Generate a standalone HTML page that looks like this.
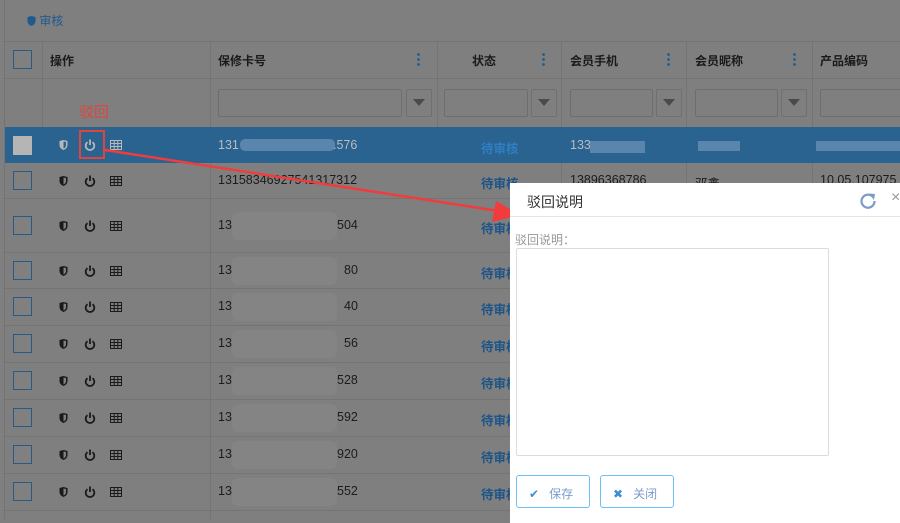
<!DOCTYPE html>
<html><head><meta charset="utf-8"><style>
*{box-sizing:border-box;margin:0;padding:0}
body{width:900px;height:519px;overflow:hidden;background:#7f7f7f;font-family:"Liberation Sans","Noto Sans CJK SC",sans-serif;position:relative;font-size:12px;color:#1e1e1e}
.abs{position:absolute}
.hl{position:absolute;height:1px;background:#747474}
.vl{position:absolute;width:1px;background:#747474}
.cb{position:absolute;left:13px;width:19px;height:19px;border:1px solid #285a85;background:#808080}
.th{position:absolute;top:52px;font-weight:bold;font-size:12px;color:#1a1a1a}
.dots{position:absolute;top:52px;width:3px;height:14px;background:radial-gradient(circle,#2b5f8a 1.3px,transparent 1.6px) 0 0/3px 5px repeat-y}
.inp{position:absolute;top:89px;height:28px;border:1px solid #6e6e6e;border-radius:2px;background:#7f7f7f}
.fb{position:absolute;top:89px;width:26px;height:28px;border:1px solid #707070;border-radius:2px}
.fb:after{content:"";position:absolute;left:6px;top:9px;border-left:6px solid transparent;border-right:6px solid transparent;border-top:7px solid #4a4a4a}
.row{position:absolute;left:5px;width:895px;border-bottom:1px solid #747474}
.txt{position:absolute;font-size:12.5px;color:#1c1c1c}
.st{position:absolute;left:481px;font-weight:bold;color:#1c5488;font-size:12.5px}
.blur{position:absolute;background:#848484;border-radius:6px}
svg.i{position:absolute}
</style></head><body>
<div class="vl" style="left:4px;top:0;height:519px"></div>
<div class="abs" style="left:27px;top:12px;color:#1f5a8e;font-size:12px"><svg width="9" height="10" style="vertical-align:-1px"><path d="M0.5 1 L4.5 0 L8.5 1 L8.5 5 Q8.5 8.5 4.5 10 Q0.5 8.5 0.5 5Z" fill="#1f5a8e"/></svg> 审核</div>
<div class="hl" style="left:5px;top:41px;width:895px"></div>
<div class="hl" style="left:5px;top:78px;width:895px"></div>
<div class="hl" style="left:5px;top:127px;width:895px"></div>
<div class="vl" style="left:42px;top:41px;height:86px"></div>
<div class="vl" style="left:210px;top:41px;height:478px"></div>
<div class="vl" style="left:437px;top:41px;height:86px"></div>
<div class="vl" style="left:561px;top:41px;height:478px"></div>
<div class="vl" style="left:686px;top:41px;height:478px"></div>
<div class="vl" style="left:812px;top:41px;height:478px"></div>
<div class="cb" style="top:50px"></div>
<div class="th" style="left:50px">操作</div>
<div class="th" style="left:218px">保修卡号</div>
<div class="th" style="left:472px">状态</div>
<div class="th" style="left:570px">会员手机</div>
<div class="th" style="left:695px">会员昵称</div>
<div class="th" style="left:820px">产品编码</div>
<div class="dots" style="left:417px"></div>
<div class="dots" style="left:542px"></div>
<div class="dots" style="left:667px"></div>
<div class="dots" style="left:793px"></div>
<div class="inp" style="left:218px;width:184px"></div><div class="fb" style="left:406px"></div>
<div class="inp" style="left:444px;width:84px"></div><div class="fb" style="left:531px"></div>
<div class="inp" style="left:570px;width:83px"></div><div class="fb" style="left:656px"></div>
<div class="inp" style="left:695px;width:83px"></div><div class="fb" style="left:781px"></div>
<div class="inp" style="left:820px;width:90px"></div>
<div class="abs" style="left:79px;top:101px;color:#e0443f;font-size:15px">驳回</div>
<!-- selected row -->
<div class="abs" style="left:5px;top:127px;width:895px;height:36px;background:#2a6290"></div>
<div class="abs" style="left:13px;top:136px;width:19px;height:19px;background:#b5b5b5"></div>
<div class="abs" style="left:79px;top:130px;width:26px;height:29px;border:2px solid #e0443f"></div>
<div class="txt" style="left:218px;top:138px;color:#bbb">131</div>
<div class="abs" style="left:240px;top:139px;width:95px;height:12px;background:#5a86ad;border-radius:5px"></div>
<div class="txt" style="left:333px;top:138px;color:#bbb">.576</div>
<div class="st" style="top:138px;color:#2f7fc3">待审核</div>
<div class="txt" style="left:570px;top:138px;color:#bbb">133</div>
<div class="abs" style="left:590px;top:141px;width:55px;height:12px;background:#5a86ad"></div>
<div class="abs" style="left:698px;top:141px;width:42px;height:10px;background:#5a86ad"></div>
<div class="abs" style="left:816px;top:141px;width:84px;height:10px;background:#5a86ad"></div>
<!-- rows -->
<div class="row" style="top:163px;height:36px"></div>
<div class="row" style="top:199px;height:54px"></div>
<div class="row" style="top:253px;height:36px"></div>
<div class="row" style="top:289px;height:37px"></div>
<div class="row" style="top:326px;height:37px"></div>
<div class="row" style="top:363px;height:37px"></div>
<div class="row" style="top:400px;height:37px"></div>
<div class="row" style="top:437px;height:37px"></div>
<div class="row" style="top:474px;height:37px"></div>
<div id="rows"></div>
<script>
var ys=[145,181,226,271,307,344,381,418,455,492];
var pre=["","","13","13","13","13","131","1315","1315","1315"];
var suf=["","","504","80","40","56","528","592","920","552"];
var h="";
ys.forEach(function(y,i){
var c=i==0?"#b8b8b8":"#1a1a1a";
if(i>0)h+='<div class="cb" style="top:'+(y-10)+'px"></div>';
h+='<svg class="i" style="left:59px;top:'+(y-5)+'px" width="9" height="10"><path d="M0.5 1 L4.5 0 L8.5 1 L8.5 5 Q8.5 8.5 4.5 10 Q0.5 8.5 0.5 5Z" fill="'+c+'"/><path d="M4.5 1.5 L7 2 L7 5 Q7 7.5 4.5 8.5Z" fill="'+(i==0?"#2a6290":"#7f7f7f")+'"/></svg>';
h+='<svg class="i" style="left:84px;top:'+(y-6)+'px" width="12" height="12"><path d="M3.5 3.2 A4.3 4.3 0 1 0 8.5 3.2" fill="none" stroke="'+c+'" stroke-width="1.8"/><line x1="6" y1="0.5" x2="6" y2="6" stroke="'+c+'" stroke-width="1.8"/></svg>';
h+='<svg class="i" style="left:110px;top:'+(y-5)+'px" width="12" height="10"><rect x="0.5" y="0.5" width="11" height="9" fill="none" stroke="'+c+'"/><path d="M0 3.5H12M0 6.5H12M4.2 0V10M7.8 0V10" stroke="'+c+'"/></svg>';
if(i>1){
h+='<div class="txt" style="left:218px;top:'+(y-8)+'px">'+pre[i]+'</div>';
h+='<div class="blur" style="left:232px;top:'+(y-14)+'px;width:105px;height:28px"></div>';
h+='<div class="txt" style="left:'+(358-suf[i].length*7)+'px;top:'+(y-8)+'px">'+suf[i]+'</div>';
}
if(i>0)h+='<div class="st" style="top:'+(y-8)+'px">待审核</div>';
});
document.getElementById("rows").innerHTML=h;
</script>
<div class="txt" style="left:218px;top:173px">13158346927541317312</div>
<div class="txt" style="left:570px;top:173px">13896368786</div>
<div class="txt" style="left:695px;top:173px">邓鑫</div>
<div class="txt" style="left:820px;top:173px">10.05.107975</div>
<!-- arrow -->
<svg class="abs" style="left:0;top:0" width="900" height="519"><line x1="105" y1="150" x2="505" y2="212" stroke="#f03c3c" stroke-width="2.5"/><polygon points="520,215 496,201 492,222" fill="#f03c3c"/></svg>
<!-- modal -->
<div class="abs" style="left:510px;top:183px;width:400px;height:340px;background:#fff">
<div class="abs" style="left:17px;top:9px;font-size:14px;color:#333">驳回说明</div>
<svg class="abs" style="left:349px;top:9px" width="18" height="18"><path d="M13.5 4.5 A6.5 6.5 0 1 0 15.5 9" fill="none" stroke="#7d9cc4" stroke-width="2.2"/><polygon points="10,1.5 16,2 15,8" fill="#7d9cc4"/></svg>
<div class="abs" style="left:381px;top:6px;font-size:16px;color:#999">×</div>
<div class="abs" style="left:0;top:33px;width:400px;height:1px;background:#e5e5e5"></div>
<div class="abs" style="left:5px;top:48px;font-size:12px;color:#999">驳回说明：</div>
<div class="abs" style="left:6px;top:65px;width:313px;height:208px;border:1px solid #d5dde6;border-radius:2px"></div>
<div class="abs" style="left:6px;top:292px;width:74px;height:33px;border:1px solid #6cc0f5;border-radius:3px;color:#3d8fd0;font-size:12px;padding:9px 0 0 12px">&#10004;&nbsp;&nbsp; <span style="color:#7a9ccc">保存</span></div>
<div class="abs" style="left:90px;top:292px;width:74px;height:33px;border:1px solid #6cc0f5;border-radius:3px;color:#3d8fd0;font-size:12px;padding:9px 0 0 12px">&#10006;&nbsp;&nbsp; <span style="color:#7a9ccc">关闭</span></div>
</div>
</body></html>
